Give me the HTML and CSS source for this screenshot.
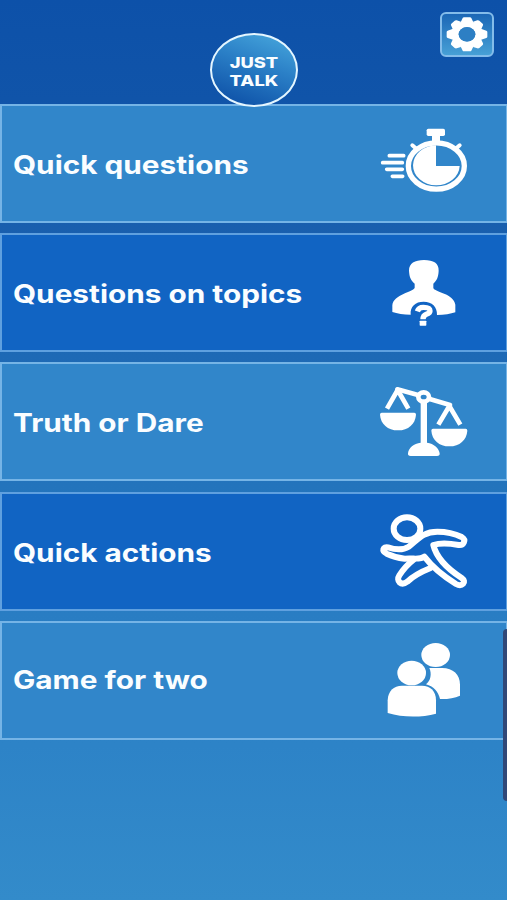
FILE: index.html
```html
<!DOCTYPE html>
<html lang="en">
<head>
    <meta charset="UTF-8">
    <meta name="viewport" content="width=device-width, initial-scale=1.0">
    <title>Just Talk</title>
    <link rel="stylesheet" href="styles.css">
</head>
<body>
    <header class="header">
        <div class="logo"><span>JUST<br>TALK</span></div>
        <button class="settings" aria-label="Settings">
            <svg viewBox="0 0 160 135">
                <g fill="none" stroke="#fff" transform="translate(80 67)">
                    <ellipse rx="35" ry="31" stroke-width="20"/>
                    <g stroke="none" fill="#fff">
                        <path id="tooth" d="M-20 -34 L-13 -49 Q-12 -51 -9 -51 H9 Q12 -51 13 -49 L20 -34Z"/>
                        <use href="#tooth" transform="rotate(180)"/>
                        <path id="side" d="M38 -18 L58 -11 Q61 -10 61 -7 V7 Q61 10 58 11 L38 18Z"/>
                        <use href="#side" transform="rotate(180)"/>
                        <path id="diag" d="M18 -38 L31 -42 Q34 -43 37 -41 L47 -32 Q49 -30 48 -27 L42 -14Z"/>
                        <use href="#diag" transform="scale(-1 1)"/>
                        <use href="#diag" transform="scale(1 -1)"/>
                        <use href="#diag" transform="scale(-1 -1)"/>
                    </g>
                </g>
                <ellipse class="hole" cx="80" cy="67" rx="25" ry="22"/>
            </svg>
        </button>
    </header>
    <main class="menu">
        <a class="item light">
            <span class="label">Quick questions</span>
            <svg class="icon" viewBox="0 -48 330 357">
                <ellipse cx="199" cy="138" rx="84" ry="69.500" fill="none" stroke="#fff" stroke-width="16"/>
                <path fill="#fff" d="M198 76 V138 H269 A70 60 0 1 1 198 76Z"/>
                <rect x="170" y="26" width="55" height="22" rx="5" fill="#fff"/>
                <rect x="186" y="46" width="24" height="20" fill="#fff"/>
                <path d="M127 76 L139 86 M269 76 L257 86" fill="none" stroke="#fff" stroke-width="12" stroke-linecap="round"/>
                <path d="M58 107 H101 M38 128 H97 M50 148 H97 M67 169 H98" stroke="#fff" stroke-width="11" stroke-linecap="round"/>
            </svg>
        </a>
        <a class="item dark">
            <span class="label">Questions on topics</span>
            <svg class="icon" viewBox="0 -51 330 357">
                <path fill="#fff" d="M162 30 C191 30 207 40 206 62 C205 83 200 91 190 101 V114 C193 126 252 131 256 164 V187 C242 192 223 195 201 195 C202 170 186 155 161 155 C136 155 120 169 122 194 C101 194 81 191 67 186 V166 C70 132 131 126 134 113 V101 C123 91 118 82 117 62 C117 40 134 30 162 30Z"/>
                <path d="M142 184 Q146 172 160 172 Q180 172 180 183 Q180 189 169 193 Q159 197 159 208" fill="none" stroke="#fff" stroke-width="16"/>
                <rect x="149" y="212" width="20" height="15" rx="2" fill="#fff"/>
            </svg>
        </a>
        <a class="item light">
            <span class="label">Truth or Dare</span>
            <svg class="icon" viewBox="0 -54 330 357">
                <g fill="none" stroke="#fff" stroke-linejoin="round">
                    <path d="M82 28 L144 45 M179 57 L240 75" stroke-width="14" stroke-linecap="round"/>
                    <ellipse cx="161" cy="51" rx="16" ry="14" stroke-width="14"/>
                    <path d="M51 86 L83 30 L115 86 M205 134 L238 78 L271 134" stroke-width="14"/>
                </g>
                <path fill="#fff" d="M152 68 H171 V188 C192 191 207 204 209 220 Q210 228 201 228 H122 Q113 228 114 220 C116 203 131 190 152 188Z"/>
                <path fill="#fff" d="M35 98 H133 Q138 98 138 104 C136 132 115 151 84 151 C53 151 32 132 30 104 Q30 98 35 98Z"/>
                <path fill="#fff" d="M189 146 H287 Q292 146 292 152 C290 180 269 199 238 199 C207 199 186 180 184 152 Q184 146 189 146Z"/>
            </svg>
        </a>
        <a class="item dark">
            <span class="label">Quick actions</span>
            <svg class="icon" viewBox="0 -39 330 357">
                <g fill="none" stroke="#fff" stroke-width="18" stroke-linejoin="round" stroke-linecap="round">
                    <ellipse cx="111" cy="71" rx="40" ry="34"/>
                    <path d="M54 127 C72 133 94 139 116 125 C141 108 155 80 202 80 C229 80 255 86 275 96 C290 105 281 122 266 120 C239 115 214 112 190 120 C198 154 224 186 275 219 C292 231 276 247 258 237 C224 216 190 190 163 155 C151 165 134 159 104 161 C82 158 65 153 50 146 C34 138 39 124 54 127Z"/>
                    <path d="M131 164 C114 177 100 193 88 211 C77 228 93 244 112 230 C132 212 155 200 180 190"/>
                </g>
            </svg>
        </a>
        <a class="item light last">
            <span class="label">Game for two</span>
            <svg class="icon" viewBox="0 -42 330 357">
                <g fill="#fff">
                    <ellipse cx="197" cy="60" rx="43" ry="36"/>
                    <ellipse cx="125" cy="114" rx="43" ry="37"/>
                    <path d="M53 234 V196 C54 168 71 152 96 152 H156 C181 152 198 168 198 196 V236 C154 248 98 248 53 234Z"/>
                    <path d="M178 99 H216 C250 99 270 119 270 149 V182 C253 189 231 193 210 192 C205 170 190 154 168 148 C182 137 186 117 178 99Z"/>
                </g>
            </svg>
        </a>
    </main>
    <div class="edge-handle"></div>
</body>
</html>
```
FILE: styles.css
```css
* {
    box-sizing: border-box;
}
body {
    margin: 0;
    height: 900px;
    position: relative;
    overflow: hidden;
    font-family: Inter, "Liberation Sans", sans-serif;
    color: #fafdff;
    background: linear-gradient(#0d51a9 0, #1054a9 100px, #195fae 228px, #1e69b5 357px, #2374bc 486px, #297dc3 615px, #2d83c7 745px, #338bca 900px);
}
.header {
    height: 104px;
    display: flex;
    justify-content: center;
    align-items: flex-start;
    padding-top: 33px;
}
.logo {
    position: relative;
    z-index: 1;
    width: 88px;
    height: 74px;
    border: 2px solid #e4f6ff;
    border-radius: 50%;
    background: linear-gradient(200deg, #49aade 0%, #2b80c7 42%, #1258ac 85%);
    display: flex;
    align-items: center;
    justify-content: center;
    text-align: center;
    font-size: 15px;
    font-weight: 800;
    line-height: 18px;
}
.logo span {
    transform: scaleX(1.22);
    padding-top: 4px;
}
.settings {
    position: absolute;
    top: 12px;
    right: 13px;
    width: 54px;
    height: 45px;
    padding: 0;
    border: 2px solid #83bcea;
    border-radius: 6px;
    background: linear-gradient(#1b67b6, #47a0d6);
    cursor: pointer;
}
.settings svg {
    display: block;
    width: 54px;
    height: 45px;
    margin: -2px;
}
.hole {
    fill: #2d7fc4;
}
.menu {
    display: flex;
    flex-direction: column;
    gap: 10.2px;
}
.item {
    height: 119px;
    display: flex;
    align-items: center;
    justify-content: space-between;
    padding: 0 27px 0 11px;
    border: solid #75b4e6;
    border-width: 2px 1px 2px 2px;
}
.light {
    background: #3186ca;
}
.dark {
    background: #1164c3;
    border-color: #5fa0df;
}
.label {
    font-size: 25.5px;
    font-weight: 700;
    white-space: nowrap;
    padding-top: 2px;
    transform: scaleX(1.167);
    transform-origin: left;
}
.last .label {
    padding: 0 0 2px;
}
.icon {
    width: 110px;
    height: 119px;
    flex: none;
    margin: -2px 0;
    margin-right: -1px;
}
.edge-handle {
    position: absolute;
    right: 0;
    top: 629px;
    width: 4px;
    height: 172px;
    border-radius: 4px 0 0 4px;
    background: #304878;
}
```
